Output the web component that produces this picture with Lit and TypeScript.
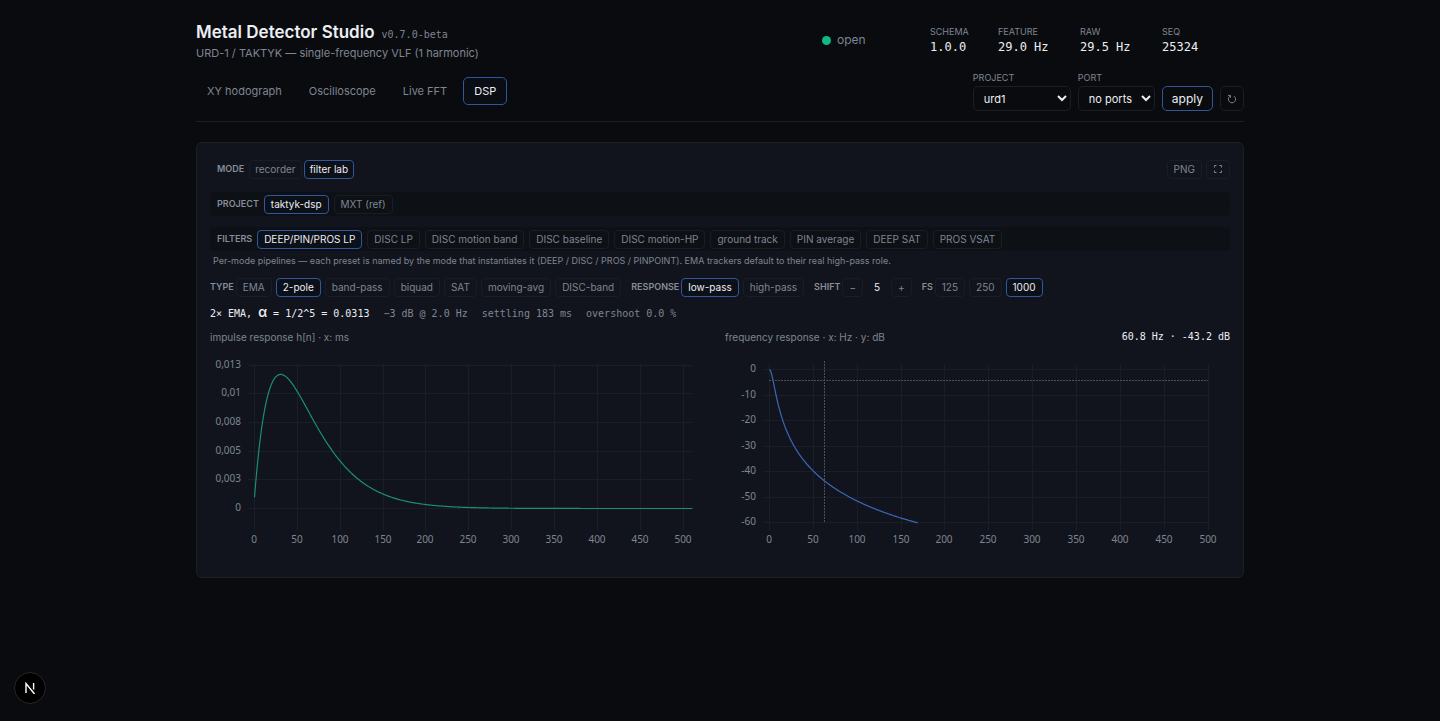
import { LitElement, html, svg, css } from "lit";
import { customElement, property, state } from "lit/decorators.js";
import { classMap } from "lit/directives/class-map.js";

const range = (from: number, to: number, step: number): number[] => {
  const out: number[] = [];
  for (let v = from; v <= to; v += step) out.push(v);
  return out;
};

const ALPHA = 1 / 32;
const POLE = 1 - ALPHA;
const SAMPLE_RATE = 1000;

const impulse = (n: number) => (n + 1) * ALPHA * ALPHA * Math.pow(POLE, n);

const magnitudeDb = (hz: number) => {
  const w = (2 * Math.PI * hz) / SAMPLE_RATE;
  const onePole = (ALPHA * ALPHA) / (1 + POLE * POLE - 2 * POLE * Math.cos(w));
  return 20 * Math.log10(onePole);
};

@customElement("filter-chart")
class FilterChart extends LitElement {
  @property() kind: "impulse" | "frequency" = "impulse";

  static styles = css`
    :host {
      display: block;
    }
    svg {
      display: block;
      width: 100%;
      height: auto;
    }
    text {
      font: 10px "Noto Sans", sans-serif;
      fill: #7f8591;
    }
    .grid {
      stroke: #1a1f27;
      stroke-width: 1;
    }
    .cursor {
      stroke: #4b515b;
      stroke-width: 1;
      stroke-dasharray: 2 1;
    }
    .impulse,
    .frequency {
      fill: none;
      stroke-width: 1.2;
      stroke-linejoin: round;
    }
    .impulse {
      stroke: #1b8f72;
    }
    .frequency {
      stroke: #3a68b8;
    }
  `;

  private renderImpulse() {
    const x = (ms: number) => 44.5 + ms * 0.857;
    const y = (h: number) => 158.5 - h * 11480;
    const yTicks: [number, string][] = [
      [0, "0"],
      [0.0025, "0,003"],
      [0.005, "0,005"],
      [0.0075, "0,008"],
      [0.01, "0,01"],
      [0.0125, "0,013"],
    ];
    const points = range(0, 511, 1).map((n) => `${x(n).toFixed(2)},${y(impulse(n)).toFixed(2)}`);
    return html`<svg viewBox="0 0 505 213" role="img" aria-label="impulse response">
      ${yTicks.map(([v, label]) => svg`
        <line class="grid" x1="38" x2="482" y1=${Math.floor(y(v)) + 0.5} y2=${Math.floor(y(v)) + 0.5}></line>
        <text x="31" y=${Math.floor(y(v)) + 3} text-anchor="end">${label}</text>`)}
      ${range(0, 500, 50).map((v) => svg`
        <line class="grid" x1=${Math.floor(x(v)) + 0.5} x2=${Math.floor(x(v)) + 0.5} y1="14" y2="180"></line>
        <text x=${Math.floor(x(v))} y="193" text-anchor="middle">${v}</text>`)}
      <polyline class="impulse" points=${points.join(" ")}></polyline>
    </svg>`;
  }

  private renderFrequency() {
    const x = (hz: number) => 44.5 + hz * 0.877;
    const y = (db: number) => 19.5 - db * 2.55;
    const points = range(0, 169, 1).map((f) => `${x(f).toFixed(2)},${y(magnitudeDb(f)).toFixed(2)}`);
    return html`<svg viewBox="0 0 505 213" role="img" aria-label="frequency response">
      ${range(-60, 0, 10).map((v) => svg`
        <line class="grid" x1="39" x2="483" y1=${Math.floor(y(v)) + 0.5} y2=${Math.floor(y(v)) + 0.5}></line>
        <text x="31" y=${Math.floor(y(v)) + 3} text-anchor="end">${v}</text>`)}
      ${range(0, 500, 50).map((v) => svg`
        <line class="grid" x1=${Math.floor(x(v)) + 0.5} x2=${Math.floor(x(v)) + 0.5} y1="14" y2="180"></line>
        <text x=${Math.floor(x(v))} y="193" text-anchor="middle">${v}</text>`)}
      <polyline class="frequency" points=${points.join(" ")}></polyline>
      <line class="cursor" x1="44" x2="483" y1="30.5" y2="30.5"></line>
      <line class="cursor" x1="99.5" x2="99.5" y1="11" y2="173"></line>
    </svg>`;
  }

  render() {
    return this.kind === "impulse" ? this.renderImpulse() : this.renderFrequency();
  }
}

@customElement("app-root")
class AppRoot extends LitElement {
  @state() private tab = "DSP";
  @state() private mode = "filter lab";
  @state() private project = "taktyk-dsp";
  @state() private preset = "DEEP/PIN/PROS LP";
  @state() private filterType = "2-pole";
  @state() private response = "low-pass";
  @state() private rate = "1000";
  @state() private shift = 5;

  static styles = css`
    :host {
      display: block;
      min-height: 100vh;
      box-sizing: border-box;
      padding: 22px 24px;
      background: #090b0f;
      color: #eceef2;
      font: 12px/16px Inter, sans-serif;
    }
    * {
      box-sizing: border-box;
    }
    button,
    select {
      font: inherit;
      color: inherit;
      margin: 0;
    }
    .page {
      max-width: 1048px;
      margin: 0 auto;
    }
    .muted {
      color: #7f8591;
    }
    .mono {
      font-family: "DejaVu Sans Mono", monospace;
    }
    header {
      display: flex;
      flex-direction: column;
      gap: 7px;
      padding-bottom: 10px;
      border-bottom: 1px solid #1b1e25;
    }
    .top,
    .bar {
      display: flex;
      justify-content: space-between;
    }
    .titles {
      flex: 1;
    }
    .title {
      display: flex;
      align-items: baseline;
      gap: 7px;
    }
    h1 {
      margin: 0;
      font-size: 17px;
      line-height: 20px;
      font-weight: 600;
    }
    .version {
      font-size: 10px;
    }
    .subtitle {
      margin: 0;
      font-size: 11px;
      line-height: 20px;
    }
    .status {
      display: flex;
      align-items: center;
      gap: 6px;
      width: 108px;
      height: 36px;
    }
    .dot {
      width: 9px;
      height: 9px;
      border-radius: 50%;
      background: #10b981;
    }
    .metrics {
      display: grid;
      grid-template-columns: 68px 82px 82px 82px;
      margin: 0;
      padding-top: 3px;
    }
    .metrics dt,
    .field label {
      font-size: 9px;
      line-height: 14px;
    }
    .metrics dd {
      margin: 0;
      font-size: 12px;
      line-height: 16px;
    }
    .bar {
      align-items: flex-end;
    }
    .tabs {
      display: flex;
      gap: 5px;
      padding-bottom: 6px;
    }
    .tab {
      height: 28px;
      padding: 0 10px;
      border: 1px solid transparent;
      border-radius: 5px;
      background: none;
      color: #7f8591;
      font-size: 11px;
    }
    .tab.on,
    .apply {
      border-color: #31569c;
      background: #0a0d14;
      color: #eceef2;
    }
    .controls {
      display: flex;
      align-items: flex-end;
      gap: 7px;
    }
    .field {
      display: flex;
      flex-direction: column;
    }
    .field label {
      line-height: 16px;
    }
    .field select,
    .apply,
    .refresh {
      height: 25px;
      border: 1px solid #1b1e25;
      border-radius: 5px;
      background: #090b0f;
    }
    .field select {
      padding: 0 0 0 6px;
      font-size: 11px;
    }
    .wide {
      width: 98px;
    }
    .narrow {
      width: 77px;
    }
    .apply {
      padding: 0 9px;
      border-color: #31569c;
    }
    .refresh {
      display: grid;
      place-items: center;
      width: 24px;
      padding: 0;
      color: #7f8591;
    }
    .panel {
      margin-top: 20px;
      padding: 14px 13px;
      border: 1px solid #1b1f27;
      border-radius: 6px;
      background: #11141c;
    }
    .row {
      display: flex;
      align-items: center;
      gap: 5px;
      height: 24px;
      padding: 0 7px;
    }
    .row.flush {
      gap: 10px;
      padding: 0;
      height: 26px;
    }
    .row.band {
      margin-top: 11px;
      border-radius: 4px;
      background: #0d1015;
    }
    .row.mode {
      padding-right: 0;
    }
    .tools {
      display: flex;
      gap: 4px;
      margin-left: auto;
    }
    .label {
      color: #878d99;
      font-size: 9px;
      font-weight: 600;
    }
    .group {
      display: flex;
      align-items: center;
      gap: 2px;
    }
    .set {
      display: flex;
      align-items: center;
      gap: 4px;
    }
    .set.tight {
      gap: 2px;
    }
    .tight .chip {
      padding: 0 5px;
    }
    .chip {
      height: 19px;
      padding: 0 6px;
      border: 1px solid #191d25;
      border-radius: 4px;
      background: none;
      color: #7f8591;
      font-size: 10px;
      line-height: 16px;
      white-space: nowrap;
    }
    .chip.on {
      border-color: #31569c;
      background: #0c1018;
      color: #eceef2;
    }
    .chip svg,
    .refresh svg {
      display: block;
    }
    .value {
      width: 20px;
      text-align: center;
      font-size: 10px;
    }
    .note {
      margin: 2px 0 5px;
      padding: 0 3px;
      font-size: 9px;
      line-height: 16px;
    }
    .stats {
      display: flex;
      gap: 14px;
      font-size: 10px;
      line-height: 16px;
      margin: 6px 0 7px;
    }
    .alpha {
      font: 600 13px/13px Inter, sans-serif;
    }
    .charts {
      display: grid;
      grid-template-columns: 1fr 1fr;
      gap: 10px;
    }
    figure {
      margin: 0;
    }
    figcaption {
      display: flex;
      justify-content: space-between;
      font-size: 10px;
      line-height: 16px;
      margin-bottom: 5px;
    }
    .reading {
      color: #eceef2;
    }
    .badge {
      position: fixed;
      left: 14px;
      bottom: 17px;
      width: 32px;
      height: 32px;
      padding: 0;
      border: 1px solid #25272b;
      border-radius: 50%;
      background: #000;
    }
    .badge svg {
      display: block;
      margin: auto;
    }
  `;

  private chips(items: string[], current: string, pick: (v: string) => void) {
    return items.map(
      (item) => html`<button
        type="button"
        class=${classMap({ chip: true, on: item === current })}
        aria-pressed=${item === current ? "true" : "false"}
        @click=${() => pick(item)}
      >${item}</button>`
    );
  }

  private metric(name: string, value: string) {
    return html`<div><dt class="muted">${name}</dt><dd class="mono">${value}</dd></div>`;
  }

  render() {
    return html`
      <div class="page">
        <header>
          <div class="top">
            <div class="titles">
              <div class="title">
                <h1>Metal Detector Studio</h1>
                <span class="version mono muted">v0.7.0-beta</span>
              </div>
              <p class="subtitle muted">URD-1 / TAKTYK — single-frequency VLF (1 harmonic)</p>
            </div>
            <div class="status muted"><span class="dot"></span>open</div>
            <dl class="metrics">
              ${this.metric("SCHEMA", "1.0.0")} ${this.metric("FEATURE", "29.0 Hz")}
              ${this.metric("RAW", "29.5 Hz")} ${this.metric("SEQ", "25324")}
            </dl>
          </div>
          <div class="bar">
            <nav class="tabs">
              ${["XY hodograph", "Oscilloscope", "Live FFT", "DSP"].map(
                (name) => html`<button
                  type="button"
                  class=${classMap({ tab: true, on: name === this.tab })}
                  @click=${() => (this.tab = name)}
                >${name}</button>`
              )}
            </nav>
            <div class="controls">
              <div class="field">
                <label class="muted" for="project">PROJECT</label>
                <select id="project" class="wide"><option>urd1</option></select>
              </div>
              <div class="field">
                <label class="muted" for="port">PORT</label>
                <select id="port" class="narrow"><option>no ports</option></select>
              </div>
              <button type="button" class="apply">apply</button>
              <button type="button" class="refresh" aria-label="Refresh ports">
                <svg width="10" height="10" viewBox="0 0 10 10" fill="none" stroke="currentColor">
                  <path d="M7 2.2A3.6 3.6 0 1 1 3 2.2M1 1.4H3.4V3.8"></path>
                </svg>
              </button>
            </div>
          </div>
        </header>

        <main class="panel">
          <div class="row mode">
            <span class="label">MODE</span>
            <div class="set tight">
              ${this.chips(["recorder", "filter lab"], this.mode, (v) => (this.mode = v))}
            </div>
            <div class="tools">
              <button type="button" class="chip">PNG</button>
              <button type="button" class="chip" aria-label="Full screen">
                <svg width="10" height="8" viewBox="0 0 10 8" fill="none" stroke="currentColor">
                  <path d="M1.5 2.5V.5H3.5M6.5 .5H8.5V2.5M8.5 5.5V7.5H6.5M3.5 7.5H1.5V5.5"></path>
                </svg>
              </button>
            </div>
          </div>
          <div class="row band">
            <span class="label">PROJECT</span>
            ${this.chips(["taktyk-dsp", "MXT (ref)"], this.project, (v) => (this.project = v))}
          </div>
          <div class="row band">
            <span class="label">FILTERS</span>
            ${this.chips(
              ["DEEP/PIN/PROS LP", "DISC LP", "DISC motion band", "DISC baseline", "DISC motion-HP",
                "ground track", "PIN average", "DEEP SAT", "PROS VSAT"],
              this.preset,
              (v) => (this.preset = v)
            )}
          </div>
          <p class="note muted">
            Per-mode pipelines — each preset is named by the mode that instantiates it (DEEP / DISC / PROS /
            PINPOINT). EMA trackers default to their real high-pass role.
          </p>
          <div class="row flush">
            <div class="group">
              <span class="label">TYPE</span>
              <div class="set">
                ${this.chips(
                  ["EMA", "2-pole", "band-pass", "biquad", "SAT", "moving-avg", "DISC-band"],
                  this.filterType,
                  (v) => (this.filterType = v)
                )}
              </div>
            </div>
            <div class="group">
              <span class="label">RESPONSE</span>
              <div class="set">
                ${this.chips(["low-pass", "high-pass"], this.response, (v) => (this.response = v))}
              </div>
            </div>
            <div class="group">
              <span class="label">SHIFT</span>
              <div class="set">
                <button type="button" class="chip" @click=${() => (this.shift -= 1)}>−</button>
                <span class="value">${this.shift}</span>
                <button type="button" class="chip" @click=${() => (this.shift += 1)}>+</button>
              </div>
            </div>
            <div class="group">
              <span class="label">FS</span>
              <div class="set">${this.chips(["125", "250", "1000"], this.rate, (v) => (this.rate = v))}</div>
            </div>
          </div>
          <div class="stats mono muted">
            <span class="reading">2× EMA, <span class="alpha">α</span> = 1/2^5 = 0.0313</span>
            <span>−3 dB @ 2.0 Hz</span>
            <span>settling 183 ms</span>
            <span>overshoot 0.0 %</span>
          </div>
          <div class="charts">
            <figure>
              <figcaption class="muted">impulse response h[n] · x: ms</figcaption>
              <filter-chart kind="impulse"></filter-chart>
            </figure>
            <figure>
              <figcaption class="muted">
                <span>frequency response · x: Hz · y: dB</span>
                <span class="mono reading">60.8 Hz · -43.2 dB</span>
              </figcaption>
              <filter-chart kind="frequency"></filter-chart>
            </figure>
          </div>
        </main>
      </div>
      <button type="button" class="badge" aria-label="Developer tools">
        <svg width="12" height="12" viewBox="0 0 12 12" fill="none" stroke="#fff" stroke-width="1.4">
          <path d="M2 11V1.5L10.5 12M9.6 1V7.5"></path>
        </svg>
      </button>
    `;
  }
}
